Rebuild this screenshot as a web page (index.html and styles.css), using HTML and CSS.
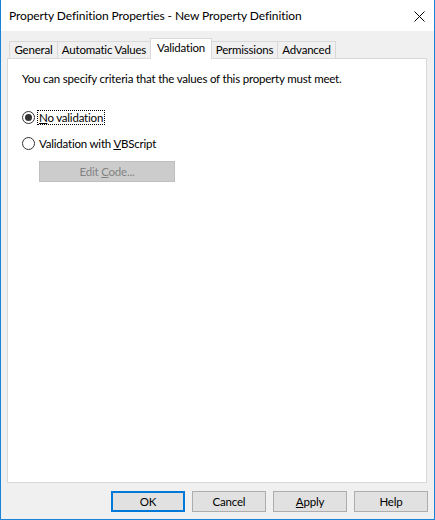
FILE: index.html
```html
<!DOCTYPE html>
<html>
<head>
<meta charset="utf-8">
<title>Property Definition Properties</title>
<link rel="stylesheet" href="styles.css">
</head>
<body>
<div class="window">
  <div class="titlebar">
    <span class="title">Property Definition Properties - New Property Definition</span>
    <svg class="close" width="11" height="11" viewBox="0 0 11 11"><path d="M0.5 0.5 L10.5 10.5 M10.5 0.5 L0.5 10.5" stroke="#000" stroke-width="1" fill="none"/></svg>
  </div>
  <div class="client">
    <div class="tabs">
      <div class="tab t-general">General</div>
      <div class="tab t-auto">Automatic Values</div>
      <div class="tab selected t-valid">Validation</div>
      <div class="tab t-perm">Permissions</div>
      <div class="tab t-adv">Advanced</div>
    </div>
    <div class="panel">
      <p class="intro">You can specify criteria that the values of this property must meet.</p>
      <div class="option first">
        <span class="radio checked"></span>
        <span class="label focus"><u>N</u>o validation</span>
      </div>
      <div class="option">
        <span class="radio"></span>
        <span class="label">Validation with <u>V</u>BScript</span>
      </div>
      <div class="edit">Edit <u>C</u>ode...</div>
    </div>
    <div class="buttons">
      <div class="btn default">OK</div>
      <div class="btn">Cancel</div>
      <div class="btn"><u>A</u>pply</div>
      <div class="btn">Help</div>
    </div>
  </div>
</div>
</body>
</html>
```
FILE: styles.css
```css
* { box-sizing: border-box; }
html, body { margin: 0; padding: 0; background: #ffffff; }
body {
  font-family: Lato, "Open Sans", sans-serif;
  font-size: 11.5px;
  letter-spacing: -0.2px;
  color: #000;
}
.window {
  width: 435px;
  height: 520px;
  border: 1px solid #1883d7;
  border-top: none;
  display: flex;
  flex-direction: column;
  background: #f0f0f0;
}
.titlebar {
  height: 31px;
  background: #fff;
  display: flex;
  align-items: center;
  padding-left: 8px;
  padding-right: 9px;
  justify-content: space-between;
}
.title {
  font-size: 12px;
  letter-spacing: -0.1px;
  line-height: 16px;
  padding-top: 1px;
}
.close { display: block; margin-top: 1px; }
.client {
  flex: 1;
  display: flex;
  flex-direction: column;
}
.tabs {
  display: flex;
  align-items: flex-start;
  height: 21px;
  margin-top: 7px;
  margin-left: 8px;
  position: relative;
  z-index: 2;
}
.tab {
  height: 17px;
  margin-top: 3px;
  border: 1px solid #d9d9d9;
  border-bottom: none;
  background: #f0f0f0;
  line-height: 16px;
  text-align: center;
  margin-right: -1px;
  white-space: nowrap;
}
.tab.selected {
  height: 21px;
  margin-top: 0;
  background: #fff;
  line-height: 17px;
  position: relative;
  z-index: 3;
}
.t-general { width: 49px; }
.t-auto { width: 94px; }
.t-valid { width: 62px; }
.t-perm { width: 67px; }
.t-adv { width: 59px; }
.panel {
  margin-top: -1px;
  margin-left: 6px;
  width: 420px;
  height: 425px;
  background: #fff;
  border: 1px solid #d9d9d9;
  padding: 12px 14px 0 14px;
  position: relative;
  z-index: 1;
}
.intro {
  margin: 0;
  line-height: 15px;
  white-space: nowrap;
}
.option {
  display: flex;
  align-items: center;
  height: 15px;
  margin-top: 11px;
}
.option.first { margin-top: 24px; }
.radio {
  width: 13px;
  height: 13px;
  border: 1px solid #333;
  border-radius: 50%;
  background: #fff;
  position: relative;
  flex: none;
}
.radio.checked::after {
  content: "";
  position: absolute;
  left: 2px;
  top: 2px;
  width: 7px;
  height: 7px;
  border-radius: 50%;
  background: #333;
}
.label {
  margin-left: 2px;
  padding: 0 1px;
  line-height: 13px;
  border: 1px dotted transparent;
  white-space: nowrap;
}
.label.focus { border-color: #000; }
.edit {
  margin-top: 10px;
  margin-left: 17px;
  width: 136px;
  height: 21px;
  background: #cccccc;
  border: 1px solid #bfbfbf;
  color: #838383;
  text-align: center;
  line-height: 19px;
}
.buttons {
  display: flex;
  justify-content: flex-end;
  gap: 7px;
  margin-top: 8px;
  margin-right: 6px;
}
.btn {
  width: 74px;
  height: 21px;
  background: #e1e1e1;
  border: 1px solid #adadad;
  text-align: center;
  line-height: 19px;
}
.btn.default {
  border: 2px solid #0078d7;
  line-height: 17px;
}
u { text-decoration: underline; text-underline-offset: 1px; }
```
